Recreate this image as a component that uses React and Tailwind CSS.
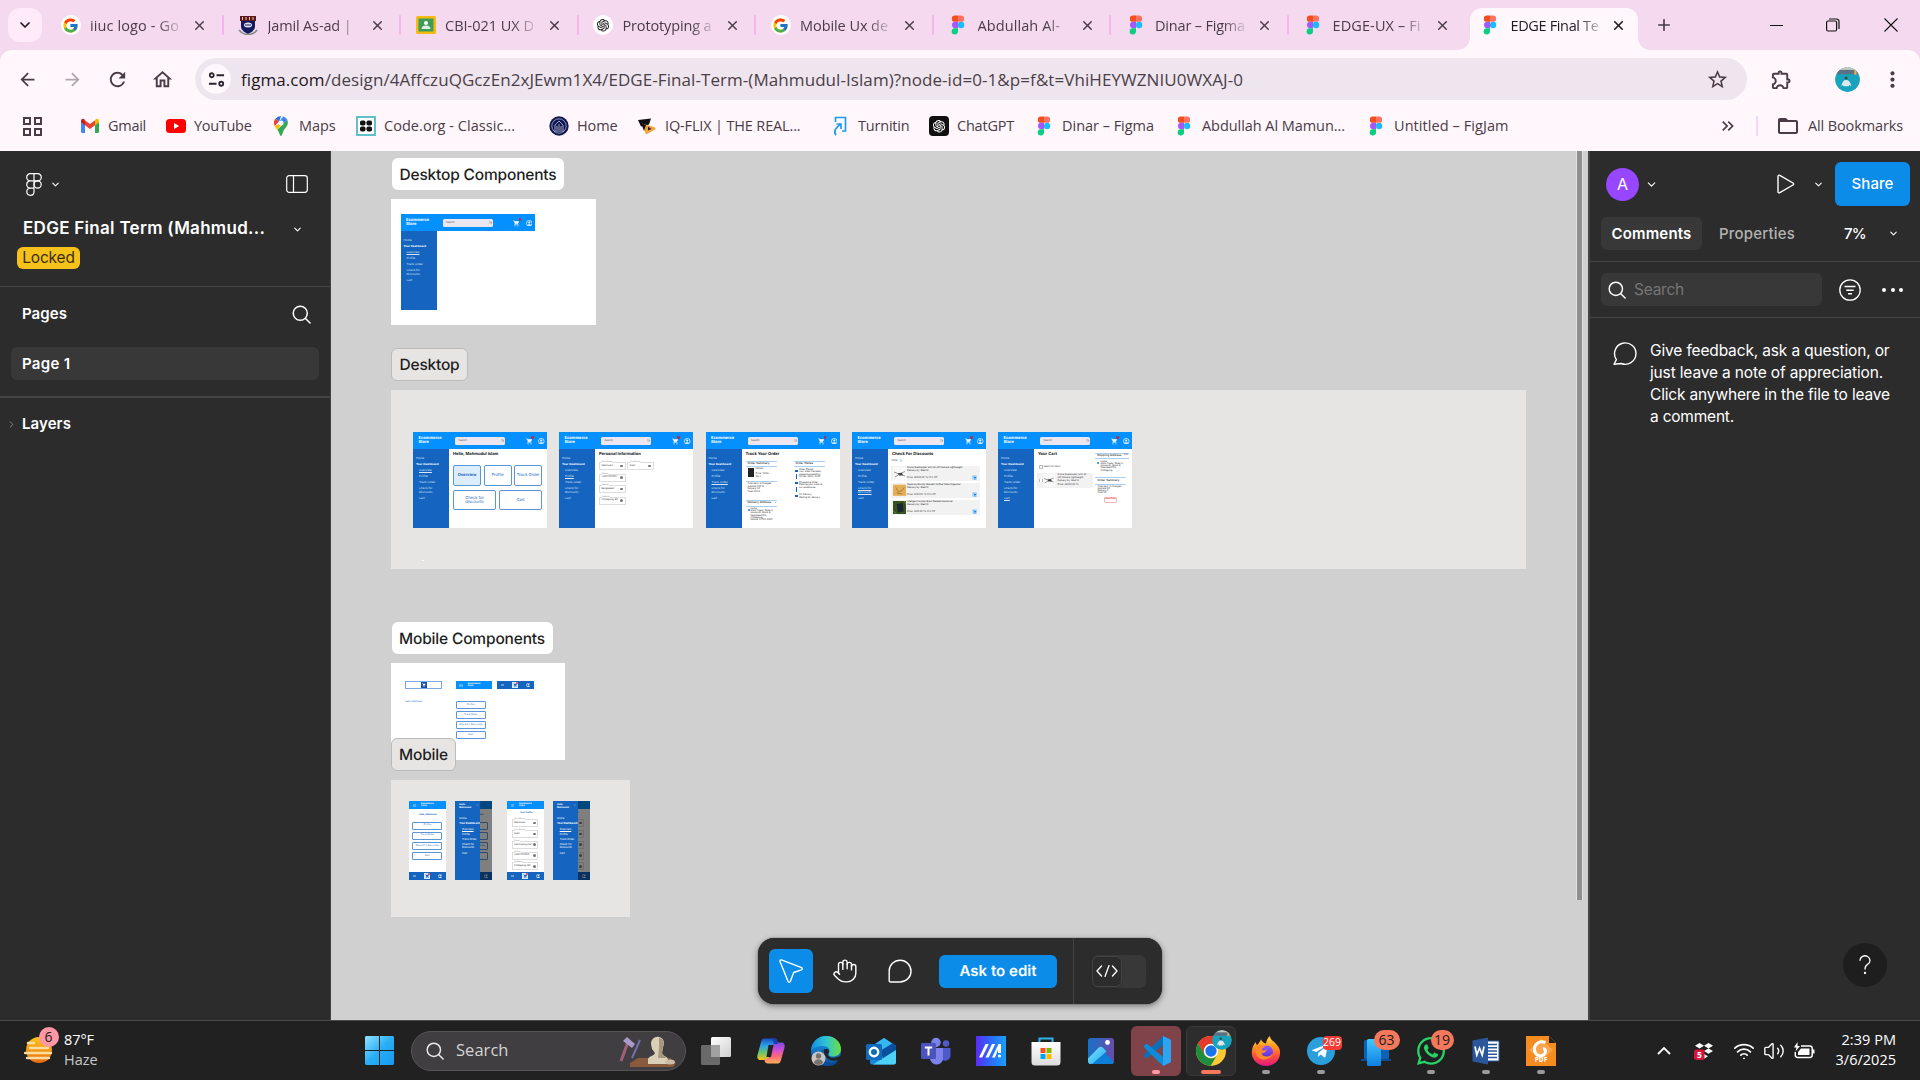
import React, { useLayoutEffect, useRef } from "react";
import { FcGoogle } from "react-icons/fc";
import { AiOutlineOpenAI } from "react-icons/ai";
import { FaWhatsapp, FaTelegramPlane } from "react-icons/fa";
import {
  MdArrowBack,
  MdArrowForward,
  MdRefresh,
  MdOutlineHome,
  MdStarBorder,
  MdOutlineExtension,
  MdMoreVert,
  MdFolderOpen,
  MdShoppingCart,
  MdKeyboardDoubleArrowRight,
} from "react-icons/md";
import { ChevronDown, ChevronRight, Hand, Wifi, Volume2, X, Plus } from "lucide-react";

/* Spreads the letters of a line so that it fills the given width. */
function Fit({ w, className = "", children }) {
  const ref = useRef(null);
  useLayoutEffect(() => {
    const el = ref.current;
    el.style.letterSpacing = "0px";
    const natural = el.getBoundingClientRect().width;
    el.style.letterSpacing = `${(w - natural) / el.textContent.length}px`;
  }, [w, children]);
  return (
    <span ref={ref} className={"inline-block whitespace-nowrap " + className}>
      {children}
    </span>
  );
}

/* ---------- site icons ---------- */
const FigmaIcon = () => (
  <svg viewBox="0 0 20 20" className="size-5">
    <path d="M10 .5H7a3.17 3.17 0 0 0 0 6.34h3z" fill="#f24e1e" />
    <path d="M10 .5h3a3.17 3.17 0 0 1 0 6.34h-3z" fill="#ff7262" />
    <path d="M10 6.84H7a3.17 3.17 0 0 0 0 6.33h3z" fill="#a259ff" />
    <circle cx="13.1" cy="10" r="3.17" fill="#1abcfe" />
    <path d="M10 13.17H7a3.17 3.17 0 1 0 3 3.17z" fill="#0acf83" />
  </svg>
);
const GoogleIcon = () => (
  <span className="flex size-5 items-center justify-center rounded-full bg-white">
    <FcGoogle size={17} />
  </span>
);
const CrestIcon = () => (
  <svg viewBox="0 0 20 20" className="size-5">
    <path d="M2 1h16v5H2z" fill="#5b1620" />
    <path d="M4.500 2v3M8 2v3M11.500 2v3M15 2v3" stroke="#e9c9a0" strokeWidth="1" />
    <path d="M3 6h14v5c0 4-3 6-7 8-4-2-7-4-7-8z" fill="#15195e" />
    <ellipse cx="10" cy="10" rx="4" ry="2.500" fill="#dfe3f3" />
    <path d="M7 10h6" stroke="#15195e" strokeWidth="1" />
    <path d="M1 15c3 4 6 4.500 9 4.500s6-.5 9-4.500" fill="none" stroke="#7d8a86" strokeWidth="1.600" />
  </svg>
);
const ClassroomIcon = () => (
  <svg viewBox="0 0 20 20" className="size-5">
    <rect x="0" y="1" width="20" height="18" rx="1.500" fill="#f5ba14" />
    <rect x="2.500" y="3.500" width="15" height="13" fill="#3f9b58" />
    <circle cx="10" cy="8" r="2" fill="#fff" />
    <path d="M5.500 14c0-2.500 2-3.500 4.500-3.500s4.500 1 4.500 3.500z" fill="#dff0e3" />
  </svg>
);
const GptTabIcon = () => (
  <span className="flex size-5 items-center justify-center rounded-full bg-white text-[#222]">
    <AiOutlineOpenAI size={16} />
  </span>
);
const GmailIcon = () => (
  <svg viewBox="0 0 20 20" className="size-5">
    <path d="M1 5v10.500A1.500 1.500 0 0 0 2.500 17H5V8z" fill="#4285f4" />
    <path d="M19 5v10.500a1.500 1.500 0 0 1-1.500 1.500H15V8z" fill="#34a853" />
    <path d="M15 4.500V9.300l4-3V5c0-2-2.200-2.800-3.600-1.600z" fill="#fbbc04" />
    <path d="M5 4.500V9.300l-4-3V5c0-2 2.200-2.800 3.600-1.600z" fill="#c5221f" />
    <path d="M5 9.300V4.200l5 3.800 5-3.800v5.100L10 13z" fill="#ea4335" />
  </svg>
);
const YoutubeIcon = () => (
  <svg viewBox="0 0 20 20" className="size-5">
    <rect x="0" y="3" width="20" height="14" rx="3.500" fill="#f00" />
    <path d="M8 7v6l5.200-3z" fill="#fff" />
  </svg>
);
const MapsIcon = () => (
  <svg viewBox="0 0 20 20" className="size-5">
    <path d="M10 0a7 7 0 0 0-5.400 2.500L8 5.400z" fill="#1a73e8" />
    <path d="M4.600 2.500A7 7 0 0 0 3.700 10L8 5.400z" fill="#ea4335" />
    <path d="M10 0c3 0 5.300 1.700 6.400 4L11.500 9.500 8 5.400 12.400 .4z" fill="#4285f4" />
    <path d="M3.700 10c.8 1.500 1.700 2.400 2.600 3.700L12.500 6z" fill="#fbbc04" />
    <path d="M16.400 4c1.600 5-1.400 7.200-3.300 9.800C11.600 16 11.300 20 10 20s-1.600-4-3.700-6.300z" fill="#34a853" />
    <circle cx="10" cy="7" r="2.500" fill="#fff" />
  </svg>
);
const CodeOrgIcon = () => (
  <svg viewBox="0 0 20 20" className="size-5">
    <rect x="1" y="1" width="18" height="18" fill="#fff" stroke="#53b9c4" strokeWidth="1.800" />
    <g fill="#111">
      <rect x="4" y="4.500" width="5.500" height="5" rx="1.800" />
      <rect x="10.500" y="4.500" width="5.500" height="5" rx="1.800" />
      <rect x="4" y="10.500" width="5.500" height="5" rx="1.800" />
      <rect x="10.500" y="10.500" width="5.500" height="5" rx="1.800" />
    </g>
  </svg>
);
const HomeSealIcon = () => (
  <svg viewBox="0 0 20 20" className="size-5">
    <circle cx="10" cy="10" r="9.700" fill="#11184f" />
    <circle cx="10" cy="10" r="7.200" fill="none" stroke="#a9b0cf" strokeWidth=".8" />
    <path d="M6 14V9l4-4 4 4v5M8 14v-4M10 14V8M12 14v-4M5 15h10" stroke="#dfe3f3" strokeWidth=".7" fill="none" />
  </svg>
);
const IqIcon = () => (
  <svg viewBox="0 0 20 20" className="size-5">
    <path d="M1 4l13-1.500-2 6-8 2z" fill="#111" />
    <path d="M5 7.500L17 11l2 2-10 5.500z" fill="#f2a33a" />
    <path d="M4 7l3 8 2-6z" fill="#111" />
    <path d="M11 10.500v4l3.500-1.500z" fill="#222" />
  </svg>
);
const TurnitinIcon = () => (
  <svg viewBox="0 0 20 20" className="size-5" fill="none" stroke="#1f9cf0" strokeWidth="1.700">
    <path d="M5.500 6V1.500H15.500v13.500H12" />
    <path d="M6 19.200C3 15.500 6 11 10.500 8.500M6.500 8h4.500v5" />
  </svg>
);
const GptBookmarkIcon = () => (
  <span className="flex size-5 items-center justify-center rounded-[4px] bg-[#111] text-white">
    <AiOutlineOpenAI size={16} />
  </span>
);

const tabs = [
  { icon: GoogleIcon, text: "iiuc logo - Go", w: 89 },
  { icon: CrestIcon, text: "Jamil As-ad |", w: 84 },
  { icon: ClassroomIcon, text: "CBI-021 UX D", w: 89 },
  { icon: GptTabIcon, text: "Prototyping a", w: 89 },
  { icon: GoogleIcon, text: "Mobile Ux de", w: 88 },
  { icon: FigmaIcon, text: "Abdullah Al-", w: 82.5 },
  { icon: FigmaIcon, text: "Dinar – Figma", w: 90 },
  { icon: FigmaIcon, text: "EDGE-UX – Fi", w: 88 },
];

const bookmarks = [
  { icon: GmailIcon, text: "Gmail", w: 38, slot: "w-[86px]" },
  { icon: YoutubeIcon, text: "YouTube", w: 57.5, slot: "w-[105px]" },
  { icon: MapsIcon, text: "Maps", w: 36.5, slot: "w-[85px]" },
  { icon: CodeOrgIcon, text: "Code.org - Classic...", w: 131, slot: "w-[193px]" },
  { icon: HomeSealIcon, text: "Home", w: 40.5, slot: "w-[88px]" },
  { icon: IqIcon, text: "IQ-FLIX | THE REAL...", w: 135.5, slot: "w-[193px]" },
  { icon: TurnitinIcon, text: "Turnitin", w: 51.5, slot: "w-[99px]" },
  { icon: GptBookmarkIcon, text: "ChatGPT", w: 57, slot: "w-[105px]" },
  { icon: FigmaIcon, text: "Dinar – Figma", w: 92, slot: "w-[140px]" },
  { icon: FigmaIcon, text: "Abdullah Al Mamun...", w: 143, slot: "w-[192px]" },
  { icon: FigmaIcon, text: "Untitled – FigJam", w: 114.5, slot: "w-[150px]" },
];

const Sep = () => <span className="h-5 w-[2px] shrink-0 rounded bg-[#fbd3f3]" />;

function Face({ id }) {
  return (
    <svg viewBox="0 0 26 26" className="size-full rounded-full">
      <clipPath id={id}>
        <circle cx="13" cy="13" r="13" />
      </clipPath>
      <g clipPath={`url(#${id})`}>
        <rect width="26" height="26" fill="#16a3bd" />
        <rect width="26" height="4" fill="#c9c9bd" />
        <rect y="3" width="26" height="4.500" fill="#5d7184" />
        <rect x="20" y="3" width="2.500" height="5" fill="#d8b25c" />
        <circle cx="11.500" cy="11.500" r="1.600" fill="#4a4542" />
        <path d="M6.500 20c1-4.500 2.500-6.500 5-6.500s4.500 2 5.500 6.500l-2.500-1.500v1.500h-6v-1.500z" fill="#dfe8ec" />
      </g>
    </svg>
  );
}

function TabStrip() {
  return (
    <div className="flex h-[50px] items-center bg-[#f5daef] pl-2 text-[#4a3b47]">
      <button className="flex h-[34px] w-[34px] items-center justify-center rounded-xl bg-[#ffeafa] text-[#231a21]">
        <ChevronDown size={16} strokeWidth={2.6} />
      </button>
      <div className="ml-[4px] flex items-center">
        {tabs.map((t, i) => (
          <div key={i} className="flex h-[34px] w-[177.500px] items-center pl-[14.500px]">
            <t.icon />
            <span className="ml-[9.500px] h-[22px] w-[91px] whitespace-nowrap text-[14.500px] leading-[23px] [mask-image:linear-gradient(to_right,#000_68px,rgba(0,0,0,0.15)_90px)]">
              <Fit w={t.w}>{t.text}</Fit>
            </span>
            <X size={15} strokeWidth={2.3} className="ml-[11px] shrink-0" />
            {i < 7 && <span className="ml-auto h-5 w-[2px] rounded bg-[#f5b4ec]" />}
          </div>
        ))}
      </div>
      <div className="relative ml-[4px] mt-2 flex h-[42px] w-[168px] items-center rounded-t-xl bg-[#fff7fb] pb-2 pl-[10px] text-[#231a21]">
        <span className="absolute -left-3 bottom-0 size-3 bg-[radial-gradient(circle_at_0_0,transparent_11.500px,#fff7fb_12px)]" />
        <span className="absolute -right-3 bottom-0 size-3 bg-[radial-gradient(circle_at_100%_0,transparent_11.500px,#fff7fb_12px)]" />
        <FigmaIcon />
        <span className="ml-[10.500px] h-[22px] w-[89px] whitespace-nowrap text-[14.500px] leading-[23px] [mask-image:linear-gradient(to_right,#000_68px,rgba(0,0,0,0.15)_90px)]">
          <Fit w={88}>EDGE Final Te</Fit>
        </span>
        <X size={15} strokeWidth={2.6} className="ml-[11px] shrink-0" />
      </div>
      <Plus size={18} strokeWidth={2.2} className="ml-[17px]" />
      <div className="ml-auto flex items-center text-[#111]">
        <span className="h-px w-[13px] bg-[#111]" />
        <svg viewBox="0 0 14 14" className="ml-[43px] size-[14px]" fill="none" stroke="currentColor" strokeWidth="1.200">
          <rect x=".6" y="3" width="10" height="10" rx="1.500" />
          <path d="M3 1h7.500A2.500 2.500 0 0 1 13 3.500V11" />
        </svg>
        <svg viewBox="0 0 14 14" className="ml-[44px] mr-[22px] size-[14px]" stroke="currentColor" strokeWidth="1.100">
          <path d="M.5.5l13 13M13.500.5l-13 13" />
        </svg>
      </div>
    </div>
  );
}

function Toolbar() {
  return (
    <div className="bg-[#f5daef]">
      <div className="h-[101px] rounded-t-xl bg-[#fff7fb] pt-2 text-[#4a3b47]">
        <div className="flex h-[42px] items-center">
          <MdArrowBack size={21} className="ml-[17px]" />
          <MdArrowForward size={21} className="ml-[24px] text-[#b0a5ad]" />
          <MdRefresh size={23} className="ml-[23px]" />
          <MdOutlineHome size={23} className="ml-[22px]" />
          <div className="ml-[21px] flex h-[42px] w-[1552px] items-center rounded-full bg-[#efe5ee]">
            <span className="ml-[6px] flex size-[30px] items-center justify-center rounded-full bg-[#fff7fb]">
              <svg viewBox="0 0 18 18" className="size-[17px]" fill="none" stroke="#2e2430" strokeWidth="1.900">
                <circle cx="4" cy="4.500" r="2.100" />
                <path d="M9 4.500h8M1 13.500h8" />
                <circle cx="14" cy="13.500" r="2.100" />
              </svg>
            </span>
            <Fit w={1002} className="ml-[10px] mt-px text-[17px] text-[#4a3f48]">
              <span className="text-[#1d161c]">figma.com</span>
              /design/4AffczuQGczEn2xJEwm1X4/EDGE-Final-Term-(Mahmudul-Islam)?node-id=0-1&amp;p=f&amp;t=VhiHEYWZNIU0WXAJ-0
            </Fit>
            <MdStarBorder size={23} className="ml-auto mr-[18px]" />
          </div>
          <MdOutlineExtension size={23} className="ml-[23px]" />
          <span className="ml-[20px]">
            <Sep />
          </span>
          <span className="ml-[22px] size-[25px]">
            <Face id="profile" />
          </span>
          <MdMoreVert size={25} className="ml-[20px]" />
        </div>
        <div className="flex h-[51px] items-center pl-[23px] pt-px text-[14.500px]">
          <svg viewBox="0 0 19 19" className="size-[19px]" fill="none" stroke="currentColor" strokeWidth="2">
            <path d="M1 1h6v6H1zM12 1h6v6h-6zM1 12h6v6H1zM12 12h6v6h-6z" />
          </svg>
          <span className="ml-[18px] mr-[20px]">
            <Sep />
          </span>
          {bookmarks.map((b, i) => (
            <div key={i} className={"flex shrink-0 items-center gap-2 " + b.slot}>
              <b.icon />
              <Fit w={b.w}>{b.text}</Fit>
            </div>
          ))}
          <MdKeyboardDoubleArrowRight size={20} className="ml-auto mr-[18px]" />
          <Sep />
          <MdFolderOpen size={24} className="ml-[18px] mr-[8px]" />
          <Fit w={95} className="mr-[17px]">
            All Bookmarks
          </Fit>
        </div>
      </div>
    </div>
  );
}

/* ---------- editor panels ---------- */
const Magnifier = ({ className }) => (
  <svg viewBox="0 0 20 20" className={className} fill="none" stroke="currentColor" strokeWidth="1.600" strokeLinecap="round">
    <circle cx="8.700" cy="8.700" r="7.400" />
    <path d="M14.200 14.200L19 19" />
  </svg>
);

function LeftPanel() {
  return (
    <aside className="flex w-[331px] shrink-0 flex-col border-r border-[#444] bg-[#2c2c2c] font-semibold text-white [font-family:Inter,sans-serif]">
      <div className="flex h-[136px] flex-col border-b border-[#444]">
        <div className="mt-[20px] flex h-[26px] items-center pl-[26px] pr-[22px]">
          <svg viewBox="0 0 16 23" className="h-[23px] w-4" fill="none" stroke="#fff" strokeWidth="1.200">
            <path d="M8 .7H4.300a3.600 3.600 0 0 0 0 7.200H8zM8 .7h3.700a3.600 3.600 0 0 1 0 7.200H8zM8 7.900H4.300a3.600 3.600 0 0 0 0 7.200H8zM8 15.100H4.300A3.600 3.600 0 1 0 8 18.700z" />
            <circle cx="11.600" cy="11.500" r="3.600" />
          </svg>
          <ChevronDown size={11} strokeWidth={2.4} className="ml-[8px]" />
          <svg viewBox="0 0 22 18" className="ml-auto h-[18px] w-[22px]" fill="none" stroke="#fff" strokeWidth="1.200">
            <rect x=".7" y=".7" width="20.600" height="16.600" rx="2.500" />
            <path d="M7.500.7v16.600" />
          </svg>
        </div>
        <div className="mt-[20px] flex h-[24px] items-center pl-[23px] pr-[27px]">
          <Fit w={242} className="text-[17px]">
            EDGE Final Term (Mahmud...
          </Fit>
          <ChevronDown size={11} strokeWidth={2.4} className="ml-auto" />
        </div>
        <div className="ml-[17px] mt-[6px] flex h-[22px] w-[63px] items-center justify-center rounded-md bg-[#f5c21b] font-normal text-[#3b2f08]">
          <Fit w={52.5} className="text-[15.500px]">
            Locked
          </Fit>
        </div>
      </div>
      <div className="flex h-[111px] flex-col border-b-2 border-[#444]">
        <div className="flex h-[60px] items-center justify-between pb-[5px] pl-[22px] pr-[19px] text-[15px]">
          <Fit w={45}>Pages</Fit>
          <Magnifier className="size-[19px]" />
        </div>
        <div className="ml-[11px] flex h-[33px] w-[308px] items-center rounded-md bg-[#383838] pl-[11px] pt-px text-[15px]">
          <Fit w={48.5}>Page 1</Fit>
        </div>
      </div>
      <div className="mt-[14px] flex h-[24px] items-center pl-[6px] text-[15px]">
        <ChevronRight size={11} strokeWidth={2} className="mr-[5px] text-[#8c8c8c]" />
        <Fit w={49}>Layers</Fit>
      </div>
    </aside>
  );
}

function RightPanel() {
  return (
    <aside className="relative flex w-[332px] shrink-0 flex-col border-l-2 border-[#444] bg-[#2c2c2c] text-white [font-family:Inter,sans-serif]">
      <div className="mt-[11px] flex h-[44px] items-center pl-4 pr-[10px]">
        <span className="flex size-[33px] items-center justify-center rounded-full bg-[#9747ff] text-[16px]">A</span>
        <ChevronDown size={13} strokeWidth={2} className="ml-[6px]" />
        <svg viewBox="0 0 18 20" className="ml-auto h-[20px] w-[18px]" fill="none" stroke="#fff" strokeWidth="1.400" strokeLinejoin="round">
          <path d="M1 2.300v15.400a1.200 1.200 0 0 0 1.800 1L16 11a1.100 1.100 0 0 0 0-2L2.800 1.300A1.200 1.200 0 0 0 1 2.300z" />
        </svg>
        <ChevronDown size={11} strokeWidth={2.4} className="ml-[18px]" />
        <span className="ml-[11px] flex h-[44px] w-[75px] items-center justify-center rounded-md bg-[#0c8ce9] text-[15px] font-medium">
          <Fit w={42}>Share</Fit>
        </span>
      </div>
      <div className="mt-[11px] flex h-[33px] items-center pl-[11px] text-[15px]">
        <span className="flex h-[33px] w-[101px] items-center justify-center rounded-md bg-[#383838] pt-px font-semibold">
          <Fit w={80}>Comments</Fit>
        </span>
        <Fit w={76} className="ml-[17px] mt-px font-medium text-[#b3b3b3]">
          Properties
        </Fit>
        <Fit w={22} className="ml-[49px] mt-px font-medium">
          7%
        </Fit>
        <ChevronDown size={11} strokeWidth={2.4} className="ml-[22px]" />
      </div>
      <div className="mt-[11px] flex h-[57px] items-center border-y border-[#444] pl-[11px] pr-[17px]">
        <div className="flex h-[33px] w-[221px] items-center rounded-md bg-[#383838] pl-[7px] text-[15.500px] text-[#757575]">
          <Magnifier className="mr-[8px] size-[18px] text-white" />
          <Fit w={50}>Search</Fit>
        </div>
        <svg viewBox="0 0 22 22" className="ml-[17px] size-[22px]" fill="none" stroke="#fff" strokeWidth="1.300">
          <circle cx="11" cy="11" r="10.200" />
          <path d="M5.500 7.600h11M7.300 11.200h7.400M9 14.800h4" strokeWidth="1.500" />
        </svg>
        <span className="ml-auto flex gap-[4.500px]">
          <i className="size-[4px] rounded-full bg-white" />
          <i className="size-[4px] rounded-full bg-white" />
          <i className="size-[4px] rounded-full bg-white" />
        </span>
      </div>
      <div className="flex pl-[23px] pt-[22px]">
        <svg viewBox="0 0 25 24" className="mt-[2px] h-[24px] w-[25px] shrink-0" fill="none" stroke="#fff" strokeWidth="1.400" strokeLinejoin="round">
          <path d="M1 22.200l2.400-4.600A10.700 10.700 0 1 1 8.200 21.500z" />
        </svg>
        <p className="ml-[12px] flex flex-col items-start text-[15.500px] leading-[22px]">
          <Fit w={239.5}>Give feedback, ask a question, or</Fit>
          <Fit w={233}>just leave a note of appreciation.</Fit>
          <Fit w={240}>Click anywhere in the file to leave</Fit>
          <Fit w={84}>a comment.</Fit>
        </p>
      </div>
      <span className="absolute bottom-[33px] right-[33px] flex size-[44px] items-center justify-center rounded-full bg-[#1e1e1e]">
        <svg viewBox="0 0 12 20" className="h-[20px] w-[12px]" fill="none" stroke="#fff" strokeWidth="1.300" strokeLinecap="round">
          <path d="M1 5.300a5 4.600 0 1 1 7.500 4.100C6.500 10.600 6 11.500 6 14" />
          <circle cx="6" cy="18" r=".5" fill="#fff" />
        </svg>
      </span>
    </aside>
  );
}

/* ---------- artboards on the canvas ---------- */
const Tiny = ({ c = "", children }) => (
  <div className={"absolute whitespace-nowrap leading-none " + c}>{children}</div>
);
const Box = ({ c = "" }) => <div className={"absolute " + c} />;

const UserGlyph = ({ className }) => (
  <svg viewBox="0 0 12 12" className={className}>
    <circle cx="6" cy="6" r="5.200" fill="none" stroke="#fff" strokeWidth="1.300" />
    <circle cx="6" cy="4.600" r="1.900" fill="#fff" />
    <path d="M2.600 9.400c1-2 5.800-2 6.800 0C8 11.200 4 11.200 2.600 9.400z" fill="#fff" />
  </svg>
);

const sideLinks = ["Overview", "Profile", "Track Order", "Check for Discounts", "Cart"];

function DesktopShell({ place, active, children }) {
  return (
    <div className={"absolute h-[95.500px] w-[134px] bg-white " + place}>
      <div className="relative h-[17px] bg-[#0590ff] text-white">
        <Tiny c="left-[5.500px] top-[4px] text-[4px] font-bold !leading-[4.400px]">
          Ecommerce
          <br />
          Store
        </Tiny>
        <div className="absolute left-[42px] top-[5px] h-[7.500px] w-[50px] rounded-[1.500px] bg-[#ece6f0] pl-[3.500px] text-[2.600px] leading-[7.500px] text-[#555]">
          Search
          <Magnifier className="absolute right-[1px] top-[2px] size-[3px]" />
        </div>
        <MdShoppingCart className="absolute left-[112.500px] top-[5.500px] size-[7px]" />
        <Box c="left-[118px] top-[4px] size-[2.500px] rounded-full bg-[#d21f2b]" />
        <UserGlyph className="absolute left-[125px] top-[5.500px] size-[6.500px]" />
      </div>
      <div className="h-[78.500px] w-[36px] whitespace-nowrap bg-[#1565c0] pl-[3px] pt-[8px] text-[2.900px] leading-[3.300px] text-[#d8e6f7]">
        <div>Home</div>
        <div className="mt-[2.800px] font-bold text-white">Your Dashboard</div>
        {sideLinks.map((s, i) => (
          <div key={s} className={"ml-[3px] mt-[2.800px] " + (i === active ? "underline" : "")}>
            {i === 3 ? (
              <>
                Check for
                <br />
                Discounts
              </>
            ) : (
              s
            )}
          </div>
        ))}
      </div>
      {children}
    </div>
  );
}

const Title = ({ children }) => <Tiny c="left-[40px] top-[20.300px] text-[4.100px] font-bold text-[#111]">{children}</Tiny>;

const pill = "absolute flex items-center justify-center rounded-[2px] border-[0.75px] border-[#5b96d8] text-center text-[4px] leading-[4.300px] text-[#1565c0] ";

const Field = ({ c, label, children }) => (
  <div className={"absolute flex h-[8px] w-[26.500px] items-center justify-between whitespace-nowrap border border-[#ddd] bg-white px-[1.500px] text-[2.300px] leading-none text-[#444] " + c}>
    <span className="absolute left-[2px] top-[-2px] bg-white text-[2px] text-[#777]">{label}</span>
    {children}
    <span className="size-[2.600px] shrink-0 rounded-full bg-[#777]" />
  </div>
);

const Rule = ({ c }) => <div className={"absolute h-px bg-[#a9d0f3] " + c} />;

const Lines = ({ c, children }) => (
  <div className={"absolute whitespace-pre text-[2.300px] leading-[2.900px] text-[#333] " + c}>{children}</div>
);

const DroneArt = ({ className }) => (
  <svg viewBox="0 0 14 14" className={className}>
    <rect width="14" height="14" fill="#f9f9f9" />
    <path d="M1 5l5 2 6-2.500M2 10l5-3 5 2" stroke="#777" strokeWidth=".8" fill="none" />
    <path d="M5 6h4l1 2.500H6z" fill="#444" />
  </svg>
);

function DealCard({ c, art, text, sub, price }) {
  return (
    <div className={"absolute left-[39px] h-[15px] w-[89px] bg-[#f3f2f2] " + c}>
      {art}
      <Lines c="left-[16px] top-[1.200px] !text-[#222]">{text + "\n" + sub}</Lines>
      <Lines c="left-[16px] top-[10.500px]">{price}</Lines>
      <span className="absolute bottom-[1px] right-[3px] flex size-[5px] items-center justify-center rounded-[1px] bg-[#b9dcfb] text-[#2a86da]">
        <MdShoppingCart size={4} />
      </span>
    </div>
  );
}

const MobileBar = ({ c }) => (
  <div className={"absolute flex h-[8px] w-[36.700px] items-center justify-between bg-[#1565c0] px-[3.500px] " + c}>
    <span className="h-[2.500px] w-[3.500px] bg-[#6a9ad6]" />
    <span className="relative flex size-[5.500px] items-center justify-center bg-[#dce9f8] text-[#1565c0]">
      <MdShoppingCart size={4.5} />
      <i className="absolute right-0 top-0 size-[1.500px] rounded-full bg-[#e03040]" />
    </span>
    <UserGlyph className="size-[4.500px]" />
  </div>
);

const MobileHead = ({ c }) => (
  <div className={"absolute h-[8px] w-[36.700px] bg-[#0590ff] " + c}>
    <Box c="left-[3.500px] top-[3px] h-[2.500px] w-[3.500px] bg-[#4fb0ff]" />
    <Tiny c="left-[12px] top-[1.800px] text-[2.200px] font-bold !leading-[2.400px] text-white">
      Ecommerce
      <br />
      Store
    </Tiny>
  </div>
);

const Drawer = () => (
  <>
    <Box c="inset-0 bg-black/50" />
    <div className="absolute left-0 top-0 h-full w-[24.500px] whitespace-nowrap bg-[#1565c0] text-[2.600px] leading-[3px] text-white">
      <Tiny c="left-[4px] top-[3px] text-[2.300px] font-bold !leading-[2.600px]">
        Hello
        <br />
        Mahmudul
      </Tiny>
      <Tiny c="left-[21px] top-[3px] text-[3px] text-[#bcd3f0]">×</Tiny>
      <div className="absolute left-[4px] top-[16px]">
        <div>Home</div>
        <div className="mt-[2.300px] font-bold">Your Dashboard</div>
        <div className="ml-[2.700px] mt-[2.300px] underline">Overview</div>
        <div className="ml-[2.700px] mt-[2.300px]">Profile</div>
        <div className="ml-[2.700px] mt-[2.300px]">Track Order</div>
        <div className="ml-[2.700px] mt-[2.300px]">
          Check for
          <br />
          Discounts
        </div>
        <div className="ml-[2.700px] mt-[2.300px]">Cart</div>
      </div>
    </div>
  </>
);

const mobileButton =
  "absolute flex h-[8px] w-[30px] items-center justify-center whitespace-nowrap rounded-[1px] border border-[#5b96d8] text-[2.400px] leading-none text-[#1565c0] ";

const mobileButtons = [
  ["Profile", "top-[20.500px]"],
  ["Track Order", "top-[30.700px]"],
  ["Check for Discounts", "top-[41px]"],
  ["Cart", "top-[51px]"],
];
const MobileHome = () => (
  <>
    <MobileHead c="left-0 top-0" />
    <Tiny c="left-[10px] top-[12.500px] text-[2.200px] font-bold text-[#1565c0]">Hello, Mahmudul</Tiny>
    {mobileButtons.map(([t, c]) => (
      <div key={t} className={mobileButton + "left-[3.200px] " + c}>
        {t}
      </div>
    ))}
    <MobileBar c="bottom-0 left-0" />
  </>
);
const MobileProfile = () => (
  <>
    <MobileHead c="left-0 top-0" />
    <Tiny c="left-[13px] top-[11.300px] text-[2.200px] font-bold text-[#1565c0]">Your Profile</Tiny>
    <Field c="left-[4.500px] top-[18px]" label="First Name">Mahmudul</Field>
    <Field c="left-[4.500px] top-[29px]" label="Last Name">Islam</Field>
    <Field c="left-[4.500px] top-[39.700px]" label="Email">mahmudul@mail</Field>
    <Field c="left-[4.500px] top-[50.500px]" label="Phone">+8801700000</Field>
    <Field c="left-[4.500px] top-[61.300px]" label="Address">Chittagong, BD</Field>
    <MobileBar c="bottom-0 left-0" />
  </>
);

const Label = ({ c, w, children }) => (
  <div className={"absolute flex items-center rounded-[6px] text-[15.500px] font-medium text-[#1e1e1e] " + c}>
    <Fit w={w}>{children}</Fit>
  </div>
);

/* The canvas starts at (331, 151) in the window. */
function Canvas() {
  return (
    <main className="relative flex-1 overflow-hidden bg-[#d0d0d0] [font-family:Inter,sans-serif] [text-rendering:geometricPrecision]">
      {/* desktop components */}
      <Label c="left-[61px] top-[7px] h-[32px] w-[172px] bg-white pl-[7.500px] pt-px" w={157}>Desktop Components</Label>
      <Box c="left-[60px] top-[48px] h-[126px] w-[204.500px] bg-white" />
      <DesktopShell place="left-[69.500px] top-[63px]" active={0} />

      {/* desktop */}
      <Label c="left-[60px] top-[197px] h-[33px] w-[77px] border border-[#bbb] bg-[#e6e5e3] pl-[7.500px] pt-px" w={60}>Desktop</Label>
      <div className="absolute left-[60px] top-[239px] h-[179px] w-[1134.500px] bg-[#e6e5e3]">
        <Box c="left-[31px] top-[170px] h-px w-[1.500px] bg-white" />
        <DesktopShell place="left-[22px] top-[42px]" active={0}>
          <Title>Hello, Mahmudul Islam</Title>
          <div className={pill + "left-[40px] top-[33px] h-[21px] w-[28px] bg-[#dcedfd] font-bold"}>Overview</div>
          <div className={pill + "left-[70.500px] top-[33px] h-[21px] w-[28px]"}>Profile</div>
          <div className={pill + "left-[101px] top-[33px] h-[21px] w-[28px] whitespace-nowrap"}>Track Order</div>
          <div className={pill + "left-[40px] top-[58px] h-[20px] w-[43px]"}>Check for<br />discounts</div>
          <div className={pill + "left-[86px] top-[58px] h-[20px] w-[43px]"}>Cart</div>
        </DesktopShell>
        <DesktopShell place="left-[168px] top-[42px]" active={1}>
          <Title>Personal Information</Title>
          <Field c="left-[40px] top-[30px]" label="First Name">Mahmudul</Field>
          <Field c="left-[68px] top-[30px]" label="Last Name">Islam</Field>
          <Field c="left-[40px] top-[41.500px]" label="Phone">+8801700000</Field>
          <Field c="left-[40px] top-[53px]" label="Gender">Bangladesh</Field>
          <Field c="left-[40px] top-[64.500px]" label="Address">Chittagong, BD</Field>
        </DesktopShell>
        <DesktopShell place="left-[314.500px] top-[42px]" active={2}>
          <Title>Track Your Order</Title>
          <Rule c="left-[40.500px] top-[29px] w-[31px]" />
          <Tiny c="left-[42px] top-[30.400px] text-[2.900px] font-medium text-[#222]">Order Summary</Tiny>
          <Rule c="left-[40.500px] top-[34px] w-[31px]" />
          <Box c="left-[42.500px] top-[36px] h-[9px] w-[5.500px] bg-[#222]" />
          <Lines c="left-[50px] top-[35.500px]">{"Namaz\n\nPrice: 550tk\nQty:1"}</Lines>
          <Rule c="left-[40.500px] top-[49px] w-[31px]" />
          <Lines c="left-[42px] top-[51px] !leading-[2.500px]">{"Total Item: 4 Changes\nSubtotal:500 tk\nDelivery:50\nTotal:550 tk"}</Lines>
          <Rule c="left-[40.500px] top-[67.500px] w-[31px]" />
          <Tiny c="left-[42px] top-[69px] text-[2.900px] font-medium text-[#222]">Delivery Address</Tiny>
          <Box c="left-[69px] top-[69.500px] size-[1.800px] rounded-full bg-[#4e9ce8]" />
          <Rule c="left-[40.500px] top-[74px] w-[31px]" />
          <Box c="left-[42px] top-[77px] size-[2px] bg-[#4e9ce8]" />
          <Lines c="left-[45px] top-[76px] !leading-[2.200px]">{"Home\nIslam Tower, Road-2,\nHouse 45, Block B,\nNasirabad R/A,\nChittagong\nMobile: 01700-0000"}</Lines>
          <Rule c="left-[88px] top-[29px] w-[31px]" />
          <Tiny c="left-[90px] top-[30.400px] text-[2.900px] font-medium text-[#222]">Order Status</Tiny>
          <Rule c="left-[88px] top-[34px] w-[31px]" />
          <Box c="left-[89.500px] top-[38px] h-[1.800px] w-[2.500px] bg-[#1565c0]" />
          <Box c="left-[90.300px] top-[42px] h-[5px] w-[0.8px] bg-[#1565c0]" />
          <Lines c="left-[93.500px] top-[36.800px] !leading-[2.500px]">{"Order Placed\nYour order has been\nplaced successfully\n06 Mar 2025, 10:00"}</Lines>
          <Box c="left-[89.500px] top-[50px] h-[1.800px] w-[2.500px] bg-[#1565c0]" />
          <Box c="left-[90.300px] top-[55px] h-[5px] w-[0.8px] bg-[#1565c0]" />
          <Lines c="left-[93.500px] top-[49.500px] !leading-[2.500px]">{"Processing Order\nPacking your order at\nour warehouse"}</Lines>
          <Box c="left-[89.500px] top-[63px] h-[1.800px] w-[2.500px] bg-[#1565c0]" />
          <Lines c="left-[93.500px] top-[62px] !leading-[2.500px]">{"On Delivery\nWaiting for delivery"}</Lines>
        </DesktopShell>
        <DesktopShell place="left-[461px] top-[42px]" active={3}>
          <Title>Check For Discounts</Title>
          <Tiny c="left-[39.500px] top-[27px] text-[2.600px] text-[#444]">Filter</Tiny>
          <Box c="left-[47.500px] top-[27px] size-[2.500px] rounded-full bg-[#bcdcf9]" />
          <DealCard
            c="top-[34px]"
            art={<DroneArt className="absolute left-[1.500px] top-[0.5px] size-[14px]" />}
            text="Drone Quadcopter with 4K HD Camera Lightweight"
            sub="Delivery by: Wed 12"
            price="Price: 42000.00 Tk 10% Off"
          />
          <DealCard
            c="top-[51px]"
            art={
              <svg viewBox="0 0 14 12" className="absolute left-[1.500px] top-[1px] h-[12.500px] w-[13px]">
                <rect width="14" height="12" fill="#e3ae55" />
                <path d="M3 3l3 5 4-2 2-3M4 9l6 1" stroke="#94703a" strokeWidth=".8" fill="none" />
              </svg>
            }
            text="Opera by Borofly Wooden Coffee Table Organizer"
            sub="Delivery by: Wed 12"
            price="Price: 2500.00 Tk 15% Off"
          />
          <DealCard
            c="top-[68px]"
            art={
              <svg viewBox="0 0 14 14" className="absolute left-[1.500px] top-[0.5px] size-[13.500px]">
                <rect width="14" height="14" fill="#35521f" />
                <path d="M4 3l6-1 1 9-6 1z" fill="#1b2633" />
                <path d="M0 10l4 4M12 0l2 4" stroke="#6a8f3c" strokeWidth="1" />
              </svg>
            }
            text="Intelligent Human Brain Related Hardcover"
            sub="Delivery by: Wed 12"
            price="Price: 1200.00 Tk 15% Off"
          />
        </DesktopShell>
        <DesktopShell place="left-[607px] top-[42px]" active={4}>
          <Title>Your Cart</Title>
          <Box c="left-[41px] top-[33px] size-[3.500px] rounded-[0.5px] bg-[#bbb]" />
          <Box c="left-[41.500px] top-[33.500px] size-[2.500px] bg-white" />
          <Tiny c="left-[45.500px] top-[33.500px] text-[2.300px] text-[#444]">Select All Items</Tiny>
          <div className="absolute left-[39px] top-[41px] h-[15px] w-[56px] bg-[#f3f2f2]">
            <Box c="left-[2px] top-[5.500px] size-[3.500px] rounded-[0.5px] bg-[#bbb]" />
            <Box c="left-[2.500px] top-[6px] size-[2.500px] bg-white" />
            <DroneArt className="absolute left-[6px] top-[1px] size-[12.500px]" />
            <Lines c="left-[20.500px] top-[1px]">{"Drone Quadcopter with 4K\nHD Camera Lightweight\nDelivery by: Wed 12"}</Lines>
            <Lines c="left-[20.500px] top-[10.500px]">Price: 42000.00 Tk</Lines>
          </div>
          <Rule c="left-[97px] top-[20.500px] w-[34px]" />
          <Tiny c="left-[99px] top-[22px] text-[2.900px] font-medium text-[#222]">Shipping Address</Tiny>
          <Tiny c="left-[126px] top-[22px] text-[2.300px] text-[#555]">Edit</Tiny>
          <Rule c="left-[97px] top-[25.500px] w-[34px]" />
          <Box c="left-[99px] top-[30px] size-[2px] bg-[#4e9ce8]" />
          <Lines c="left-[102.500px] top-[28.500px] !leading-[2.300px]">{"Home\nIslam Tower, Road-2,\nHouse 45, Block B,\nNasirabad R/A,\nChittagong"}</Lines>
          <Rule c="left-[97px] top-[45px] w-[31px]" />
          <Tiny c="left-[99.500px] top-[46.700px] text-[2.900px] font-medium text-[#222]">Order Summary</Tiny>
          <Rule c="left-[97px] top-[51.500px] w-[31px]" />
          <Lines c="left-[99.500px] top-[53.500px] !leading-[2.300px]">{"Total Item: 0 Changes\nSubtotal:00\nDelivery:0\nTotal:00"}</Lines>
          <div className="absolute left-[106px] top-[65px] flex h-[5.500px] w-[13px] items-center justify-center whitespace-nowrap rounded-[1px] border border-[#f9b5b5] text-[1.900px] font-bold leading-none text-[#d22]">Place Order</div>
        </DesktopShell>
      </div>

      {/* mobile components */}
      <Label c="left-[61px] top-[471px] h-[32px] w-[161px] bg-white pl-[7px] pt-px" w={146}>Mobile Components</Label>
      <div className="absolute left-[60px] top-[512px] h-[97px] w-[174px] bg-white">
        <div className="absolute left-[14px] top-[18px] flex h-[8px] w-[37px] items-center justify-center border border-[#7aa9df]">
          <span className="flex size-[6px] items-center justify-center bg-[#1550a5] text-white">
            <MdShoppingCart size={4} />
          </span>
        </div>
        <MobileHead c="left-[64.700px] top-[18px]" />
        <MobileBar c="left-[106px] top-[18px]" />
        <Tiny c="left-[14px] top-[38px] text-[2.200px] text-[#1565c0]">Hello, Mahmudul</Tiny>
        {[
          ["Profile", "top-[38px]"],
          ["Track Order", "top-[48px]"],
          ["Check for Discounts", "top-[58px]"],
          ["Cart", "top-[68px]"],
        ].map(([t, c]) => (
          <div key={t} className={mobileButton + "left-[64.700px] " + c}>
            {t}
          </div>
        ))}
      </div>

      {/* mobile */}
      <div className="absolute left-[60px] top-[629px] h-[136.500px] w-[239px] bg-[#e6e5e3]">
        <div className="absolute left-[18px] top-[21px] h-[79px] w-[36.700px] overflow-hidden bg-white">
          <MobileHome />
        </div>
        <div className="absolute left-[64.300px] top-[21px] h-[79px] w-[36.700px] overflow-hidden bg-white">
          <MobileHome />
          <Drawer />
        </div>
        <div className="absolute left-[116px] top-[21px] h-[79px] w-[36.700px] overflow-hidden bg-white">
          <MobileProfile />
        </div>
        <div className="absolute left-[162px] top-[21px] h-[79px] w-[36.700px] overflow-hidden bg-white">
          <MobileProfile />
          <Drawer />
        </div>
      </div>
      <Label c="left-[60px] top-[587px] h-[33px] w-[65px] border border-[#bbb] bg-[#e6e5e3] pl-[7px] pt-px" w={49}>Mobile</Label>

      {/* scrollbar */}
      <Box c="right-[5px] top-0 h-[749px] w-[7px] border-x border-[#e2e2e2] bg-[#8f8f8f]" />

      {/* tool palette */}
      <div className="absolute left-[427px] top-[787px] flex h-[66px] w-[404px] items-center rounded-[16px] bg-[#2c2c2c] pl-[11px] text-white shadow-[0_2px_6px_rgba(0,0,0,0.45),0_0_1px_rgba(0,0,0,0.8)]">
        <span className="flex size-[44px] items-center justify-center rounded-md bg-[#0c8ce9]">
          <svg viewBox="0 0 24 24" className="size-6" fill="none" stroke="#fff" strokeWidth="1.400" strokeLinejoin="round">
            <path d="M.9 2.200A1.200 1.200 0 0 1 2.400 .9L22.600 8.600a1.200 1.200 0 0 1-.1 2.200L14.700 13.500 11.300 22.500a1.200 1.200 0 0 1-2.200 0z" />
          </svg>
        </span>
        <Hand size={26} strokeWidth={1.3} className="ml-[19px]" />
        <svg viewBox="0 0 24 24" className="ml-[30px] size-6" fill="none" stroke="#fff" strokeWidth="1.400">
          <path d="M2.500 23A1.300 1.300 0 0 1 1.200 21.700V12A10.900 10.900 0 1 1 12.100 23z" />
        </svg>
        <span className="ml-[27px] flex h-[33px] w-[118px] items-center justify-center rounded-md bg-[#0c8ce9] text-[15px] font-semibold">
          <Fit w={77}>Ask to edit</Fit>
        </span>
        <span className="ml-[16px] h-full w-px bg-[#444]" />
        <span className="ml-[18px] flex h-[33px] w-[54px] rounded-md bg-[#383838]">
          <span className="mt-[1px] flex h-[31px] w-[30px] items-center justify-center rounded-md border border-[#444] bg-[#2c2c2c] shadow">
            <svg viewBox="0 0 22 12" className="h-[12px] w-[22px]" fill="none" stroke="#fff" strokeWidth="1.300" strokeLinecap="round">
              <path d="M5.500 1L1 6l4.500 5M16.500 1L21 6l-4.500 5M13 .6L9 11.400" />
            </svg>
          </span>
        </span>
      </div>
    </main>
  );
}

/* ---------- taskbar ---------- */
const A = ({ children, className = "size-[30px]" }) => (
  <svg viewBox="0 0 30 30" className={className}>
    {children}
  </svg>
);
const Grad = ({ id, stops, x2 = "1", y2 = "1" }) => (
  <linearGradient id={id} x1="0" y1="0" x2={x2} y2={y2}>
    {stops.map((s, i) => (
      <stop key={i} offset={i / (stops.length - 1)} stopColor={s} />
    ))}
  </linearGradient>
);

const TaskView = () => (
  <A>
    <Grad id="tv" stops={["#ffffff", "#cfcfcf"]} />
    <rect x="0" y="9" width="19" height="20" rx="1.500" fill="#6a6a6a" />
    <rect x="10" y="1" width="20" height="20" rx="1.500" fill="url(#tv)" />
    <rect x="10" y="9" width="9" height="12" fill="#a2a2a2" />
  </A>
);
const Copilot = () => (
  <A>
    <Grad id="cp1" x2="0" stops={["#1a4fc4", "#2aa0e8", "#6bc46b", "#f5c518"]} />
    <Grad id="cp2" x2="0" stops={["#7a4be0", "#c94fd8", "#ff6a7a", "#ffb15a"]} />
    <path d="M8 2.500h10c2 0 3 1 3.500 3l.8 2.500h-3c-2 0-3 1-3.500 3l-2.500 10c-.5 2-1.500 3-3.500 3H5c-3 0-4.300-2-3.500-5L5 6c.6-2.300 1.500-3.500 3-3.500z" fill="url(#cp1)" />
    <path d="M22 27.500H12c-2 0-3-1-3.500-3l-.5-2h3c2 0 3-1 3.500-3L17 9.500c.5-2 1.500-3 3.500-3H25c3 0 4.300 2 3.500 5L25 24c-.6 2.300-1.500 3.500-3 3.500z" fill="url(#cp2)" />
    <path d="M12.500 9h5L15 21h-4.500z" fill="#222" />
    <path d="M16 2.500h3c1.500 0 2.500 2 3 5.500h-4z" fill="#1b3fae" />
  </A>
);
const Edge = () => (
  <A>
    <Grad id="ed1" y2="0" stops={["#0f8de0", "#2fc3d5", "#6be03a"]} />
    <Grad id="ed2" x2="0" stops={["#1a9be8", "#0a4fa0"]} />
    <circle cx="15" cy="15" r="15" fill="url(#ed2)" />
    <path d="M0 14C1 5.500 7.500 0 15 0c9 0 15 6 15 13 0 5-4 7.500-8 7.500-3.500 0-5-1.500-4-3.500 2-3.500-1-7-6-7C7 10 2 12 0 14z" fill="url(#ed1)" />
    <path d="M12 14c-3 7 2 13 9 13 3 0 5-1 7-3-3 5-7 6-12 6C9 30 7 17 12 14z" fill="#0b4a94" />
    <path d="M12.500 14.500c1-2 5-2 5.500.5 0 3-2 3-1 4.500 2.500 3.500 8 2.500 12 .5l1 2c-3 4-16 5-17.500-7.500z" fill="#222" />
    <circle cx="7.500" cy="22.500" r="7" fill="#c9c5c2" />
    <circle cx="7.500" cy="20" r="2.700" fill="#77726f" />
    <path d="M3 27c0-5 9-5 9 0-2 2.500-7 2.500-9 0z" fill="#77726f" />
  </A>
);
const Outlook = () => (
  <A>
    <path d="M4 11L18 2l12 8v16a2.500 2.500 0 0 1-2.500 2.500h-21A2.500 2.500 0 0 1 4 26z" fill="#1a86d8" />
    <path d="M8 9l10-7 12 8-13 10z" fill="#35b8f1" />
    <path d="M14 15L27 7l3 3v5L18 24z" fill="#0a4f9e" />
    <path d="M30 14v12a2.500 2.500 0 0 1-2.500 2.500H7z" fill="#4ed1f7" />
    <rect x="0" y="8" width="16" height="16" rx="1.500" fill="#0f6cbd" />
    <circle cx="8" cy="16" r="4.200" fill="none" stroke="#fff" strokeWidth="2.400" />
  </A>
);
const TeamsIc = () => (
  <A>
    <circle cx="15" cy="6.500" r="4.700" fill="#7b83eb" />
    <circle cx="25" cy="7.500" r="3.200" fill="#5059c9" />
    <path d="M20 12h9.500v8a5.500 5.500 0 0 1-9.500 3z" fill="#5059c9" />
    <path d="M9 12h13v9a6.500 6.500 0 0 1-13 2z" fill="#7b83eb" />
    <rect x="0" y="7" width="15" height="16" rx="1.500" fill="#4b53bc" />
    <path d="M3.800 11.500h7.400M7.500 11.500v8" stroke="#fff" strokeWidth="2" />
  </A>
);
const Asus = () => (
  <A>
    <Grad id="as" x2="1" y2="0" stops={["#5a2cf5", "#2a6cfa", "#17a0ff"]} />
    <rect width="30" height="30" fill="url(#as)" />
    <path d="M3 21.500L9.500 8h3.200L6.200 21.500zM9.500 21.500L16 8h3.200l-6.500 13.500zM16 21.500L22.500 8H25v9h-3v-3.500l-3 8z" fill="#fff" />
    <circle cx="23.500" cy="20" r="1.600" fill="#fff" />
  </A>
);
const Store = () => (
  <A>
    <Grad id="st" x2="0" stops={["#ffffff", "#dcdcdc"]} />
    <path d="M8.500 8V2.500h13V8" fill="none" stroke="#2db4e8" strokeWidth="2" />
    <path d="M.5 6h29v20a3.500 3.500 0 0 1-3.500 3.500H4A3.500 3.500 0 0 1 .5 26z" fill="url(#st)" />
    <rect x="9.500" y="12" width="5" height="5" fill="#f25022" />
    <rect x="15.500" y="12" width="5" height="5" fill="#7fba00" />
    <rect x="9.500" y="18" width="5" height="5" fill="#00a4ef" />
    <rect x="15.500" y="18" width="5" height="5" fill="#ffb900" />
  </A>
);
const Photos = () => (
  <A>
    <Grad id="ph" y2="0" stops={["#1672c8", "#6a4ba8"]} />
    <Grad id="ph2" stops={["#7fe3ff", "#1fa8ee"]} />
    <rect x="2" y="2" width="26" height="26" rx="3" fill="url(#ph)" />
    <circle cx="21.500" cy="6.500" r="2.400" fill="#fff" />
    <path d="M3 27L15 13l13 13a3 3 0 0 1-3 2H5a3 3 0 0 1-2-1z" fill="#0d7fd8" />
    <path d="M2 26V22.500L12.500 11.800a3 3 0 0 1 4.500 0l3.500 3.600L6 28H5a3 3 0 0 1-3-2z" fill="url(#ph2)" />
  </A>
);
const VsCode = () => (
  <A>
    <path d="M22 0l7 3.200a1.500 1.500 0 0 1 1 1.500v20.600a1.500 1.500 0 0 1-1 1.500L22 30z" fill="#29a5f2" />
    <path d="M22 0L3 18.700a1 1 0 0 0 0 1.500l2 1.800a1 1 0 0 0 1.300 0L22 9z" fill="#0b70b8" />
    <path d="M22 30L3 11.300a1 1 0 0 1 0-1.500L5 8a1 1 0 0 1 1.300 0L22 21z" fill="#0f8bd8" />
  </A>
);
const Chrome = () => (
  <A>
    <circle cx="15" cy="15" r="15" fill="#fcc934" />
    <path d="M2 7.500A15 15 0 0 1 28 7.500L28 8H15a7 7 0 0 0-6.500 4.500L8.600 18.700z" fill="#e33b2e" />
    <path d="M2 7.500A15 15 0 0 0 14.600 30L21.200 18.700A7 7 0 0 1 8.800 18.500z" fill="#1e8e3e" />
    <circle cx="15" cy="15" r="7.200" fill="#fff" />
    <circle cx="15" cy="15" r="5.700" fill="#1a73e8" />
  </A>
);
const Firefox = () => (
  <A>
    <Grad id="ff" x2="0" stops={["#ffe14d", "#ff9a1f", "#ff4f3a", "#e31587"]} />
    <Grad id="ff2" x2="0" stops={["#9059ff", "#5b2bd0"]} />
    <path d="M19 0c0 4 4 5 6.500 8.500 2 2 4 5 3.500 9C28.500 25 22.500 30 15 30S.8 24.500.8 16.500c0-4 1.500-8 4-10.500 0 1.500.5 2.500 1.500 3C8 7 9.500 4.500 10 3.500c1 2 2.500 3.500 5 4C15.500 4.500 16.500 1.500 19 0z" fill="url(#ff)" />
    <circle cx="15.500" cy="16" r="6.500" fill="url(#ff2)" />
    <path d="M5 10c4-2 8-1 9 1.500-2 0-3 1-3 2.500 2 1 4 0 5-1-1 3.500-3.500 4-5.500 4.500 1 3.500 8 4.500 11 0-1 7-14 9-16.500 0C4 14 4 12 5 10z" fill="#ff8a2a" />
  </A>
);
const Telegram = () => (
  <span className="flex size-[28px] items-center justify-center rounded-full bg-[#2a9fdc] pr-[3px] text-white">
    <FaTelegramPlane size={18} />
  </span>
);
const PhoneLink = () => (
  <A>
    <rect x="3" y="4" width="25" height="19" rx="1.500" fill="#0c62b5" />
    <path d="M0 23h30v2h-30z" fill="#0a4d90" />
    <Grad id="pl" x2="0" stops={["#45c7ff", "#0f7fe0"]} />
    <rect x="6" y="3" width="14" height="27" rx="1.500" fill="url(#pl)" />
  </A>
);
const Word = () => (
  <A>
    <path d="M14 5h14v20H14z" fill="#fff" stroke="#2b579a" strokeWidth="1" />
    <path d="M16 8.500h10M16 11.700h10M16 15h10M16 18.300h10M16 21.500h10" stroke="#2b579a" strokeWidth="1.500" />
    <path d="M1.500 4.500L17 1.500v27L1.500 25.500z" fill="#2b579a" />
    <path d="M4 10.500l1.800 8.500L8.500 12l2.700 7L13 10.500" stroke="#fff" strokeWidth="1.700" fill="none" />
  </A>
);
const Pdf = () => (
  <span className="relative size-[30px]">
    <A>
      <path d="M0 0h23l7 7v23H0z" fill="#f68b1f" />
      <path d="M23 0l7 7h-7z" fill="#222" />
      <path d="M15 3l12 11-12 11L3 14z" fill="#f9a54e" />
      <path d="M19.500 6.500C13 4 7.500 9 8.500 14.500c.8 4.500 6 7 9.500 4 2.500-2.200 2-5.500-1-6" fill="none" stroke="#fff" strokeWidth="3" />
    </A>
    <span className="absolute inset-x-0 bottom-[2px] text-center text-[6.500px] font-bold leading-none text-white">PDF</span>
  </span>
);

const Badge = ({ c, children }) => (
  <span className={"absolute flex items-center justify-center rounded-full text-[14px] leading-none " + c}>{children}</span>
);

const apps = [
  { el: <TaskView /> },
  { el: <Copilot /> },
  { el: <Edge /> },
  { el: <Outlook /> },
  { el: <TeamsIc /> },
  { el: <Asus /> },
  { el: <Store /> },
  { el: <Photos /> },
  { el: <VsCode />, frame: "bg-[#80434a]", dot: "w-[8px] bg-[#ff98a4]" },
  {
    el: <Chrome />,
    frame: "border border-[#3a3a3a] bg-[#2d2d2d]",
    dot: "w-[20px] bg-[#f4795c]",
    badge: (
      <span className="absolute right-[7px] top-[4px] size-[20px]">
        <Face id="taskface" />
      </span>
    ),
  },
  { el: <Firefox />, dot: "w-[8px] bg-[#9a9a9a]" },
  {
    el: <Telegram />,
    dot: "w-[8px] bg-[#9a9a9a]",
    badge: <Badge c="right-[7px] top-[10px] h-[14px] w-[19px] !rounded-[4px] bg-[#f23c34] !text-[10.500px] text-white">269</Badge>,
  },
  {
    el: <PhoneLink />,
    badge: <Badge c="right-[4px] top-[4px] h-[20px] w-[26px] bg-[#f4795c] text-[#1c1c1c]">63</Badge>,
  },
  {
    el: <FaWhatsapp size={32} color="#25d366" />,
    dot: "w-[8px] bg-[#9a9a9a]",
    badge: <Badge c="right-[5px] top-[4px] h-[20px] w-[23px] bg-[#f4795c] text-[#1c1c1c]">19</Badge>,
  },
  { el: <Word />, dot: "w-[8px] bg-[#9a9a9a]" },
  { el: <Pdf />, dot: "w-[8px] bg-[#9a9a9a]" },
];

function Taskbar() {
  return (
    <footer className="flex h-[60px] items-center border-t border-[#4a4a4a] bg-[#212121] text-white">
      <div className="relative ml-[24px] flex w-[341px] items-center pb-px">
        <svg viewBox="0 0 30 28" className="h-[28px] w-[30px]">
          <Grad id="haze" x2="0" stops={["#ffc61a", "#e86a10"]} />
          <circle cx="15" cy="14" r="13" fill="url(#haze)" />
          <path d="M4 7h6M6 12h18M1 17h14M3 22h22M12 17h15" stroke="#f8dca0" strokeWidth="2.400" strokeLinecap="round" />
        </svg>
        <Badge c="left-[14.500px] top-[-3px] size-[20px] bg-[#ff98a4] text-[#1c1c1c]">6</Badge>
        <div className="ml-[10px] flex flex-col items-start text-[14.500px] leading-[20px]">
          <Fit w={30}>87°F</Fit>
          <Fit w={33.5} className="text-[#c8c8c8]">Haze</Fit>
        </div>
      </div>
      <svg viewBox="0 0 29 29" className="size-[29px]">
        <Grad id="win" stops={["#8fe4ff", "#2aaef5", "#1399f0"]} />
        <path d="M1 0h13v14H0V1zM15 0h13l1 1v13H15zM0 15h14v14H1l-1-1zM15 15h14v13l-1 1H15z" fill="url(#win)" />
      </svg>
      <div className="ml-[17px] flex h-[40px] w-[275px] items-center rounded-full border border-[#565456] bg-[#403e40] pl-[14px]">
        <Magnifier className="size-[18px] text-[#ececec]" />
        <Fit w={52.5} className="ml-[12px] text-[16.500px] text-[#d4d4d4]">Search</Fit>
        <svg viewBox="0 0 60 32" className="ml-auto mr-[7px] h-[32px] w-[60px]">
          <path d="M12 28l8-5h32l6 5-3 4H12z" fill="#8a5a3c" />
          <path d="M3 26L10 7" stroke="#a0607a" strokeWidth="3" />
          <path d="M5 6l4-4 8 7-3 4z" fill="#a99ac8" />
          <path d="M14 23L22 5" stroke="#6f6fb4" strokeWidth="2" />
          <path d="M30 29v-5c1-3 6-3 7-6l-3-4-1-5c0-5 4-8 8-7 5 1 6 6 4 10l-1 6c1 4 6 3 6 7v4z" fill="#dccfb8" />
          <path d="M41 3c4 0 6 5 4 9l-1 6 4 5H40l1-9z" fill="#a8977e" />
          <ellipse cx="52" cy="27" rx="5" ry="2.500" fill="#cbbda5" />
        </svg>
      </div>
      <div className="ml-[2.500px] flex">
        {apps.map((a, i) => (
          <div key={i} className="relative flex h-[50px] w-[55px] items-center justify-center">
            <span className={"flex h-[50px] w-[50px] items-center justify-center rounded-[6px] " + (a.frame || "")}>{a.el}</span>
            {a.badge}
            {a.dot && <span className={"absolute bottom-[1.500px] h-[4px] rounded-full " + a.dot} />}
          </div>
        ))}
      </div>
      <div className="ml-auto flex items-center">
        <svg viewBox="0 0 14 9" className="h-[9px] w-[14px]" fill="none" stroke="#fff" strokeWidth="1.800">
          <path d="M1 8l6-6 6 6" />
        </svg>
        <svg viewBox="0 0 19 18" className="ml-[23px] h-[18px] w-[19px]">
          <path d="M5.500 1L10 3.700 5.500 6.400 1 3.700zM14.500 1L19 3.700l-4.500 2.700L10 3.700zM14.500 6.400L19 9l-4.500 2.700L10 9zM10 12l4 2.200-4 2.600z" fill="#fff" />
          <rect x="0" y="7.500" width="10.500" height="10.500" rx="2.500" fill="#d8143a" />
          <text x="3" y="16" fontSize="8.500" fontWeight="700" fill="#fff" className="[font-family:'Open_Sans',sans-serif]">5</text>
        </svg>
        <Wifi size={22} strokeWidth={1.9} className="ml-[20px]" />
        <Volume2 size={22} strokeWidth={1.5} className="ml-[8px]" />
        <svg viewBox="0 0 22 18" className="ml-[8px] h-[18px] w-[22px]" fill="none" stroke="#fff" strokeWidth="1.500">
          <path d="M8 4h9a2.200 2.200 0 0 1 2.200 2.200v7A2.200 2.200 0 0 1 17 15.500H4.500a2.200 2.200 0 0 1-2.200-2.300V10" />
          <path d="M20.500 7.500v4" strokeWidth="2" />
          <path d="M8 6.500h8.500v6.500H5V10z" fill="#fff" stroke="none" />
          <path d="M4.500 0L1 5.500h2.500L2.500 9.500 7 4H4.500z" fill="#fff" stroke="none" />
        </svg>
        <div className="ml-[10px] mr-[24px] flex w-[71px] flex-col items-end pb-px text-[14.500px] leading-[20px]">
          <Fit w={54.5}>2:39 PM</Fit>
          <Fit w={60.5}>3/6/2025</Fit>
        </div>
      </div>
    </footer>
  );
}

export default function App() {
  return (
    <div className="flex h-[1080px] w-[1920px] flex-col overflow-hidden [font-family:'Open_Sans','Noto_Sans',sans-serif]">
      <TabStrip />
      <Toolbar />
      <div className="flex min-h-0 flex-1">
        <LeftPanel />
        <Canvas />
        <RightPanel />
      </div>
      <Taskbar />
    </div>
  );
}
